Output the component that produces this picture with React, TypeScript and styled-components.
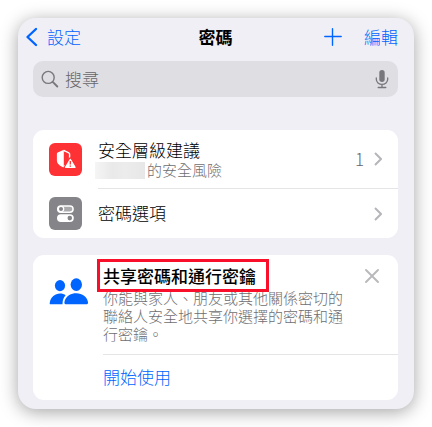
import React from "react";
import styled, { createGlobalStyle } from "styled-components";

const blue = "#0064ff";
const grey = "#6e6e72";

const GlobalStyle = createGlobalStyle`
  *, *::before, *::after { box-sizing: border-box; }
  body {
    margin: 0;
    background: #fff;
    color: #000;
    font-family: "Noto Sans CJK TC", "Noto Sans", sans-serif;
    font-size: 17px;
    font-weight: 300;
    line-height: 24px;
  }
  h1, h2, p { margin: 0; padding: 0; }
  button, input { font: inherit; color: inherit; }
`;

const Page = styled.div`
  padding: 18px;
`;

const Screen = styled.main`
  display: flex;
  flex-direction: column;
  padding: 0 16px 9px 15px;
  border-radius: 18px;
  background: #f0eff5;
  box-shadow: 0 3px 18px rgba(0, 0, 0, 0.36);
`;

const NavBar = styled.header`
  display: grid;
  grid-template-columns: 1fr auto 1fr;
  align-items: center;
  height: 43px;
  padding-bottom: 5px;
`;

const NavTitle = styled.h1`
  font-size: 17px;
  font-weight: 700;
`;

const NavSide = styled.div<{ $end?: boolean }>`
  display: flex;
  align-items: center;
  justify-content: ${(p) => (p.$end ? "flex-end" : "flex-start")};
  gap: 22px;
  margin-left: ${(p) => (p.$end ? "0" : "-8px")};
`;

const TextButton = styled.button`
  display: flex;
  align-items: center;
  padding: 0;
  border: 0;
  background: none;
  color: ${blue};
  cursor: pointer;
`;

const BackLink = styled.a`
  display: flex;
  align-items: center;
  gap: 9px;
  color: ${blue};
  text-decoration: none;
`;

const SearchBar = styled.label`
  display: flex;
  align-items: center;
  gap: 6px;
  height: 36px;
  padding: 0 9px 0 8px;
  border-radius: 10px;
  background: #dfdee3;
  color: #78787c;
`;

const SearchInput = styled.input`
  flex: 1;
  min-width: 0;
  padding: 0;
  border: 0;
  outline: 0;
  background: none;
  &::placeholder { color: #66666a; opacity: 1; }
`;

const IconButton = styled.button`
  display: flex;
  padding: 0;
  border: 0;
  background: none;
  color: inherit;
  cursor: pointer;
`;

const AddButton = styled(IconButton)`
  color: ${blue};
`;

const Card = styled.section`
  border-radius: 11px;
  background: #fff;
  & + & { margin-top: 17px; }
`;

const SettingsCard = styled(Card)`
  margin-top: 33px;
`;

const Row = styled.a`
  display: flex;
  gap: 16px;
  align-items: center;
  padding-left: 16px;
  color: inherit;
  text-decoration: none;
`;

const RowBody = styled.span<{ $tall?: boolean }>`
  display: flex;
  flex: 1;
  align-items: center;
  gap: 10px;
  height: ${(p) => (p.$tall ? "59px" : "49px")};
  padding-right: 16px;
  border-bottom: ${(p) => (p.$tall ? "1px solid #e5e5e8" : "0")};
`;

const RowText = styled.span`
  display: flex;
  flex: 1;
  flex-direction: column;
  padding-bottom: 2px;
`;

const RowDetail = styled.span`
  display: flex;
  align-items: center;
  gap: 2px;
  margin-left: -3px;
  color: ${grey};
  font-size: 15px;
  line-height: 16px;
`;

const HiddenName = styled.span`
  width: 50px;
  height: 17px;
  background: linear-gradient(90deg, #f5f5f5, #e9e9ea 35%, #ececec 60%, #e7e7e8);
`;

const Count = styled.span`
  color: #66666a;
`;

const Tile = styled.span<{ $color: string }>`
  display: flex;
  width: 33px;
  height: 33px;
  border-radius: 6px;
  background: ${(p) => p.$color};
`;

const Promo = styled(Card)`
  display: flex;
  gap: 14px;
  padding-left: 16px;
`;

const PromoIcon = styled.div`
  padding-top: 23px;
`;

const PromoBody = styled.div`
  flex: 1;
`;

const PromoIntro = styled.div`
  padding: 9px 0 11px;
  border-bottom: 1px solid #e5e5e8;
`;

const PromoHead = styled.div`
  display: flex;
  align-items: center;
  justify-content: space-between;
  padding-right: 19px;
`;

const PromoTitle = styled.h2`
  position: relative;
  font-size: 17px;
  font-weight: 500;
  &::after {
    content: "";
    position: absolute;
    inset: -5px -13px -4px -6px;
    border: 3px solid #fa0f2b;
  }
`;

const PromoText = styled.p`
  padding: 1px 48px 0 0;
  color: ${grey};
  font-size: 15px;
  line-height: 18px;
`;

const StartButton = styled(TextButton)`
  height: 44px;
  margin-bottom: 1px;
`;

const Chevron = () => (
  <svg width="8" height="14" viewBox="0 0 8 14" fill="none" stroke="#b6b6ba" strokeWidth="2" aria-hidden="true">
    <path d="M1 1l6 6-6 6" />
  </svg>
);

const BackIcon = () => (
  <svg width="13" height="20" viewBox="0 0 13 20" fill="none" stroke="currentColor" strokeWidth="2.4" strokeLinecap="round" strokeLinejoin="round" aria-hidden="true">
    <path d="M11 2L2.5 10l8.5 8" />
  </svg>
);

const PlusIcon = () => (
  <svg width="18" height="18" viewBox="0 0 18 18" stroke="currentColor" strokeWidth="1.4" strokeLinecap="round" aria-hidden="true">
    <path d="M8.5 .8v16.400M.8 8.5h16.400" />
  </svg>
);

const SearchIcon = () => (
  <svg width="18" height="18" viewBox="0 0 18 18" fill="none" stroke="currentColor" strokeLinecap="round" aria-hidden="true">
    <circle cx="7.2" cy="7.4" r="6" strokeWidth="1.4" />
    <path d="M11.7 11.9l4.6 4.6" strokeWidth="1.9" />
  </svg>
);

const MicIcon = () => (
  <svg width="14" height="20" viewBox="0 0 14 20" fill="none" stroke="currentColor" strokeWidth="1.3" strokeLinecap="round" aria-hidden="true">
    <rect x="4.3" y="1" width="5.4" height="12" rx="2.7" fill="currentColor" stroke="none" />
    <path d="M1.3 9v1.3a5.7 5.1 0 0 0 11.4 0V9M7 15.5v3M3.2 18.5h7.6" />
  </svg>
);

const ShieldIcon = () => (
  <svg width="33" height="33" viewBox="0 0 33 33" aria-hidden="true">
    <path d="M14.8 6.8L8.8 9.4c-.6.2-.9.6-.9 1.200v6.800c0 3.300 3 5.200 6.900 7.100z" fill="#fff" />
    <path d="M14.8 7.500l5 2.300c.5.2.8.6.8 1.100v6M14.800 23.700l2-1.200" fill="none" stroke="#fff" strokeWidth="1.4" />
    <path d="M21.300 15.800l5.200 8.800H16.100z" fill="#fff" stroke="#fe3134" strokeWidth="2.800" strokeLinejoin="round" />
    <path d="M21.300 16.300l4.800 8H16.500z" fill="#fff" stroke="#fff" strokeWidth="1.200" strokeLinejoin="round" />
    <path d="M21.300 18v3.400M21.300 22.500v1.200" stroke="#fe3134" strokeWidth="1.300" />
  </svg>
);

const TogglesIcon = () => (
  <svg width="33" height="33" viewBox="0 0 33 33" aria-hidden="true">
    <rect x="8.7" y="8.9" width="15.4" height="6.4" rx="3.2" fill="none" stroke="#fff" strokeWidth="1.5" />
    <rect x="13.5" y="9" width="10.5" height="6.2" rx="3.1" fill="#fff" opacity=".3" />
    <circle cx="12" cy="12.1" r="3.3" fill="#fff" />
    <circle cx="12" cy="12.1" r="2" fill="#858489" />
    <rect x="8" y="17.2" width="16.8" height="7.8" rx="3.9" fill="#fff" />
    <circle cx="20.8" cy="21.1" r="2.3" fill="#858489" />
  </svg>
);

const PeopleIcon = () => (
  <svg width="40" height="28" viewBox="0 0 40 28" fill={blue} aria-hidden="true">
    <ellipse cx="11" cy="7.6" rx="5.1" ry="5.6" />
    <path d="M1.5 26.2C.6 26.2.6 25.6.8 24.4 1.7 19.2 6 15.6 11 15.6c2.3 0 4.2.6 5.7 1.7C14.5 19.2 13.6 22.2 13.5 26.2z" />
    <ellipse cx="27.3" cy="6.6" rx="5.7" ry="6.3" />
    <path d="M17.2 26.2c-1.5 0-2-.7-1.8-2C16.2 19 21.3 15.3 27.3 15.3S38.2 19 39 24.2c.2 1.3-.3 2-1.8 2z" />
  </svg>
);

const CloseIcon = () => (
  <svg width="14" height="14" viewBox="0 0 14 14" stroke="#b9b9bc" strokeWidth="1.9" strokeLinecap="round" aria-hidden="true">
    <path d="M1 1l12 12M13 1L1 13" />
  </svg>
);

export default function App() {
  return (
    <>
      <GlobalStyle />
      <Page lang="zh-TW">
        <Screen>
          <NavBar>
            <NavSide>
              <BackLink href="#settings">
                <BackIcon />
                設定
              </BackLink>
            </NavSide>
            <NavTitle>密碼</NavTitle>
            <NavSide $end>
              <AddButton type="button" aria-label="加入">
                <PlusIcon />
              </AddButton>
              <TextButton type="button">編輯</TextButton>
            </NavSide>
          </NavBar>

          <SearchBar>
            <SearchIcon />
            <SearchInput type="search" placeholder="搜尋" aria-label="搜尋" />
            <IconButton type="button" aria-label="語音輸入">
              <MicIcon />
            </IconButton>
          </SearchBar>

          <SettingsCard>
            <Row href="#security">
              <Tile $color="#fe3134"><ShieldIcon /></Tile>
              <RowBody $tall>
                <RowText>
                  <span>安全層級建議</span>
                  <RowDetail>
                    <HiddenName />
                    的安全風險
                  </RowDetail>
                </RowText>
                <Count>1</Count>
                <Chevron />
              </RowBody>
            </Row>
            <Row href="#options">
              <Tile $color="#858489"><TogglesIcon /></Tile>
              <RowBody>
                <RowText>密碼選項</RowText>
                <Chevron />
              </RowBody>
            </Row>
          </SettingsCard>

          <Promo>
            <PromoIcon>
              <PeopleIcon />
            </PromoIcon>
            <PromoBody>
              <PromoIntro>
                <PromoHead>
                  <PromoTitle>共享密碼和通行密鑰</PromoTitle>
                  <IconButton type="button" aria-label="關閉">
                    <CloseIcon />
                  </IconButton>
                </PromoHead>
                <PromoText>
                  你能與家人、朋友或其他關係密切的聯絡人安全地共享你選擇的密碼和通行密鑰。
                </PromoText>
              </PromoIntro>
              <StartButton type="button">開始使用</StartButton>
            </PromoBody>
          </Promo>
        </Screen>
      </Page>
    </>
  );
}
